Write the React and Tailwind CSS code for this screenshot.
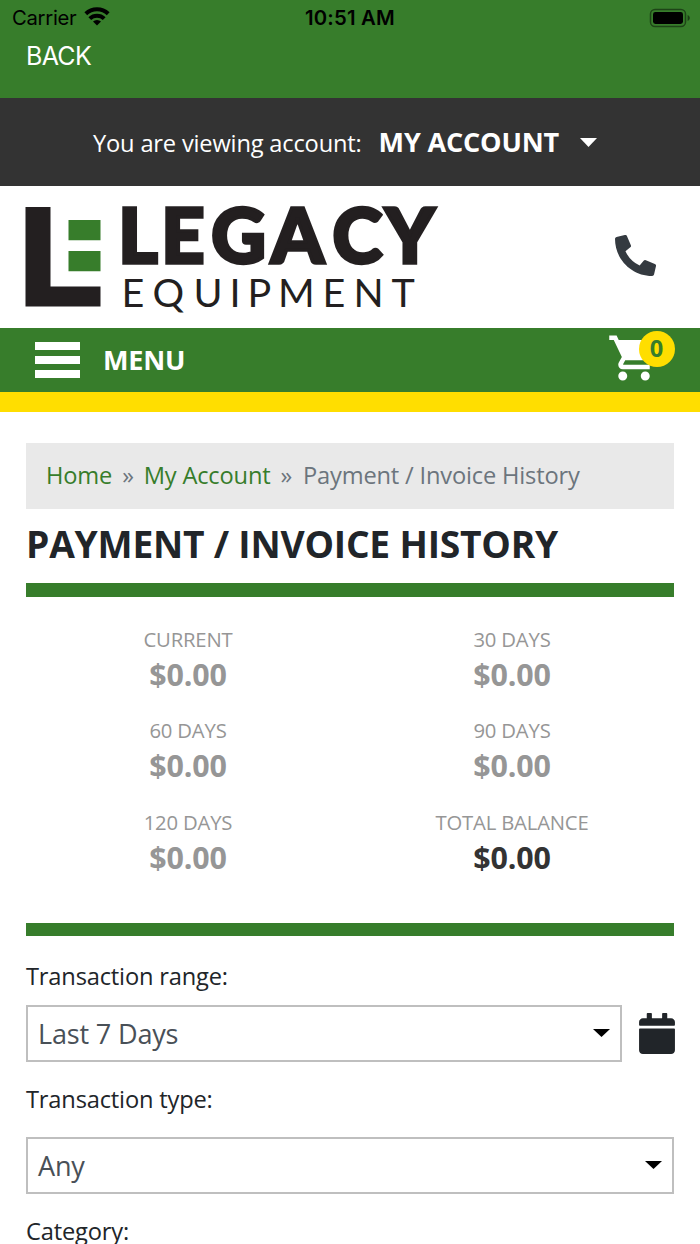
import React from "react";
import { FaCalendar, FaPhoneAlt } from "react-icons/fa";
import { MdShoppingCart } from "react-icons/md";

const balances = [
  { label: "CURRENT", amount: "$0.00" },
  { label: "30 DAYS", amount: "$0.00" },
  { label: "60 DAYS", amount: "$0.00" },
  { label: "90 DAYS", amount: "$0.00" },
  { label: "120 DAYS", amount: "$0.00" },
  { label: "TOTAL BALANCE", amount: "$0.00", total: true },
];

const Caret = ({ className }) => (
  <svg viewBox="0 0 16 8" preserveAspectRatio="none" className={className} fill="currentColor">
    <path d="M0 0h16L8 8z" />
  </svg>
);

const StatusBar = () => (
  <div className="grid h-[36px] grid-cols-3 items-center px-[12px] text-[20.3px] leading-[36px] text-black">
    <div className="flex items-center gap-[8px]">
      <span className="tracking-[-0.3px]">Carrier</span>
      <svg viewBox="0 0 26 19" className="mt-[-3px] h-[19px] w-[26px]">
        <g fill="none" stroke="#000" strokeWidth="4">
          <path d="M1.800 6.700a16.200 16.200 0 0 1 22.400 0" />
          <path d="M5.800 11.600a10.400 10.400 0 0 1 14.400 0" />
        </g>
        <path d="M13 18.600l-4-4a5.800 5.800 0 0 1 8 0z" />
      </svg>
    </div>
    <div className="text-center font-semibold tracking-[0.2px]">10:51 AM</div>
    <div className="mr-[-3px] flex justify-end">
      <svg viewBox="0 0 42 20" className="mt-[-1px] h-[20px] w-[42px]">
        <rect x="1.500" y="1.500" width="35" height="17" rx="4.500" fill="none" stroke="#000" strokeOpacity="0.45" strokeWidth="1.500" />
        <rect x="4" y="4" width="30" height="12" rx="2.400" />
        <path d="M38.600 7v6c1.300-.6 2.200-1.700 2.200-3s-.9-2.400-2.200-3z" fillOpacity="0.5" />
      </svg>
    </div>
  </div>
);

const Logo = () => (
  <svg viewBox="0 -19 430 142" className="h-[142px] w-[430px]" fill="#231f20">
    <path d="M0.500 2h25v79.500H75.500v20H0.500z" />
    <path fill="#377d2b" d="M43.500 15H75.500v20.200H43.500zM43.500 46H75.500v20.200H43.500z" />
    <text
      x="93.300 136.300 186.300 246 307.500 360"
      y="57.500"
      fontSize="75.500"
      fontWeight="900"
      fontFamily="Lato, sans-serif"
      stroke="#231f20"
      strokeWidth="3.400"
    >
      LEGACY
    </text>
    <text x="96.500 127.500 168.500 204.500 222.500 253 297.500 328.500 366.500" y="101.800" fontSize="39.500" fontFamily="Lato, sans-serif">
      EQUIPMENT
    </text>
  </svg>
);

const SelectBox = ({ value, className }) => (
  <div
    className={`flex h-[57px] items-center justify-between border-2 border-[#bfbfbf] bg-white pl-[10px] pr-[10px] text-[27.05px] text-[#495057] ${className}`}
  >
    <span className="pt-[2px]">{value}</span>
    <Caret className="mt-[-2px] h-[8px] w-[17px] text-black" />
  </div>
);

const App = () => {
  return (
    <div className="h-[1244px] w-[700px] overflow-hidden bg-white font-['Open_Sans',sans-serif] text-[23.67px] tracking-[-0.18px] text-[#212529]">
      <header>
        <div className="h-[98px] bg-[#377d2b] font-[Inter,sans-serif]">
          <StatusBar />
          <button className="ml-[26px] block text-[25px] leading-[40px] tracking-[-0.7px] text-white">BACK</button>
        </div>

        <div className="flex h-[88px] items-center bg-[#333333] pl-[93px] text-white">
          <span className="pt-[3px]">You are viewing account:</span>
          <span className="ml-[17px] pt-[1px] text-[27.05px] font-bold">MY ACCOUNT</span>
          <Caret className="ml-[21px] h-[9px] w-[17px]" />
        </div>

        <div className="flex h-[142px] items-center justify-between pl-[25px] pr-[44px]">
          <Logo />
          <FaPhoneAlt className="mt-[-3px] h-[41px] w-[41px] text-[#343a40]" />
        </div>

        <nav className="flex h-[84px] items-center border-b-[20px] border-[#ffde00] bg-[#377d2b] pl-[35px] text-white">
          <div className="flex w-[45px] flex-col gap-[6px]">
            <div className="h-[8px] bg-white" />
            <div className="h-[8px] bg-white" />
            <div className="h-[8px] bg-white" />
          </div>
          <span className="ml-[23px] pt-[1px] text-[27.05px] font-bold">MENU</span>
          <div className="relative ml-auto mr-[25px] h-[58px] w-[68px]">
            <MdShoppingCart className="absolute left-0 top-0 h-[54px] w-[54px]" />
            <span className="absolute right-0 top-0 h-[36px] w-[36px] rounded-full bg-[#ffde00] pr-[1px] text-center text-[23.67px] font-bold leading-[35px] text-[#377d2b]">
              0
            </span>
          </div>
        </nav>
      </header>

      <main className="px-[26px] pt-[31px]">
        <div className="flex h-[66px] items-center bg-[#e9e9e9] pl-[20px] text-[#6c757d]">
          <a className="text-[#377d2b]">Home</a>
          <span className="mx-[10px]">»</span>
          <a className="text-[#377d2b]">My Account</a>
          <span className="ml-[10px] mr-[11px]">»</span>
          <span>Payment / Invoice History</span>
        </div>

        <h1 className="mt-[15px] h-[59px] text-[37.2px] font-bold leading-[40px] tracking-[-0.22px]">
          PAYMENT / INVOICE HISTORY
        </h1>

        <div className="grid h-[353px] grid-cols-2 content-start border-b-[13px] border-t-[14px] border-[#377d2b] pt-[28px] text-center">
          {balances.map((item) => (
            <div key={item.label} className="h-[91.3px] text-[#969696]">
              <div className="text-[20.3px] leading-[28px]">{item.label}</div>
              <div
                className={`text-[30.4px] font-bold leading-[44px] ${item.total ? "text-[#333333]" : ""}`}
              >
                {item.amount}
              </div>
            </div>
          ))}
        </div>

        <div className="mt-[24px] leading-[32px]">Transaction range:</div>
        <div className="mr-[-1px] mt-[13px] flex items-center justify-between">
          <SelectBox value="Last 7 Days" className="w-[596px]" />
          <FaCalendar className="h-[41px] w-[36px]" />
        </div>

        <div className="mt-[21px] leading-[32px]">Transaction type:</div>
        <SelectBox value="Any" className="mt-[22px] w-full" />

        <div className="mt-[21px] leading-[32px]">Category:</div>
      </main>
    </div>
  );
};

export default App;
